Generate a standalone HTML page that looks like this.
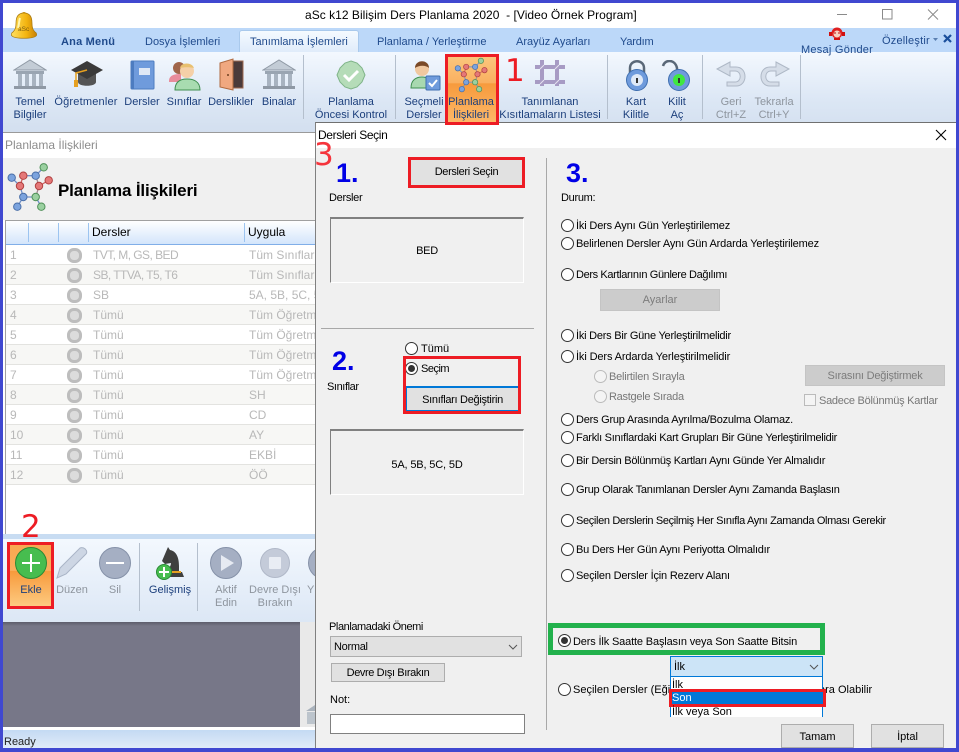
<!DOCTYPE html>
<html><head><meta charset="utf-8"><style>
html,body{margin:0;padding:0;width:959px;height:752px;overflow:hidden;background:#fff}
body{position:relative;font-family:"Liberation Sans",sans-serif;font-size:11px;color:#000}
div,span,svg{position:absolute}
.t{white-space:nowrap;line-height:13px}
.r{color:#1c3f7c;font-size:11px;line-height:13px;text-align:center;white-space:nowrap;transform:translateX(-50%);margin-top:1px}
.g{color:#8e959e}
.tab{color:#1f4a8c;font-size:11px;white-space:nowrap;line-height:13px;margin-top:1px}
.sep{width:1px;background:#b4bfcd}
.row{left:6px;width:309px;height:20px;border-bottom:1px solid #e3e3e0;box-sizing:border-box;color:#b8b8b8;font-size:12px;line-height:19px}
.row span{white-space:nowrap;top:1px}
.ci{left:61px;top:3px;width:9px;height:9px;border:3px solid #bdbdbd;border-radius:45%;background:#dcdcdc}
.rad{width:11px;height:11px;border:1px solid #333;border-radius:50%;background:#fff}
.rad.d{border-color:#bbb;background:#f4f4f4}
.rad.on:after{content:"";position:absolute;left:2px;top:2px;width:7px;height:7px;border-radius:50%;background:#333}
.red{border:3px solid #ed1c24;box-sizing:border-box}
.btn{background:#e1e1e1;border:1px solid #adadad;box-sizing:border-box;text-align:center;white-space:nowrap}
.o{font-size:11px;white-space:nowrap;line-height:13px;margin-top:1px}
.big{font-family:"Liberation Sans",sans-serif;font-weight:bold;color:#0000e6;font-size:27px;line-height:28px}
.rn{color:#ed1c24;font-family:"DejaVu Sans",sans-serif;font-size:31px;line-height:30px}
</style></head><body>

<!-- title -->
<div class="t" style="left:305px;top:9px;font-size:12px;letter-spacing:.03px">aSc k12 Bilişim Ders Planlama 2020 &nbsp;- [Video Örnek Program]</div>
<svg style="left:836px;top:8px" width="110" height="14" fill="none" stroke="#8a8a8a"><path d="M1 6.500H11"/><rect x="46.500" y="1.500" width="9.500" height="9.500"/><path d="M92 1.500l10 10M102 1.500l-10 10"/></svg>

<!-- tab bar -->
<div style="left:3px;top:28px;width:953px;height:24px;background:#bcd8f9"></div>
<div style="left:239px;top:30px;width:120px;height:23px;background:linear-gradient(#f5faff,#dfebfa);border:1px solid #a9c9ec;border-bottom:none;border-radius:3px 3px 0 0;box-sizing:border-box"></div>
<div class="tab" style="left:61px;top:35px;font-weight:bold;letter-spacing:.2px">Ana Menü</div>
<div class="tab" style="left:145px;top:35px">Dosya İşlemleri</div>
<div class="tab" style="left:250px;top:35px">Tanımlama İşlemleri</div>
<div class="tab" style="left:377px;top:35px">Planlama / Yerleştirme</div>
<div class="tab" style="left:516px;top:35px">Arayüz Ayarları</div>
<div class="tab" style="left:620px;top:35px;letter-spacing:-.2px">Yardım</div>
<div class="tab" style="left:801px;top:43px;z-index:5;letter-spacing:.25px">Mesaj Gönder</div>
<div class="tab" style="left:882px;top:34px;letter-spacing:.2px">Özelleştir</div>
<svg style="left:933px;top:32px;z-index:5" width="22" height="14"><path d="M0 6h5l-2.500 3z" fill="#5a7fb0"/><path d="M11 3l7 7M18 3l-7 7" stroke="#1a4f9c" stroke-width="2.200"/></svg>
<svg style="left:828px;top:26px;z-index:5" width="18" height="16"><circle cx="9" cy="7" r="5.500" fill="#e02020"/><circle cx="9" cy="8" r="3.500" fill="#f7d0c0"/><path d="M6 7h2M10 7h2" stroke="#c01010"/><rect x="1" y="6" width="3" height="4" fill="#d01010"/><rect x="14" y="6" width="3" height="4" fill="#d01010"/><rect x="6" y="12" width="6" height="2" fill="#d01010"/></svg>

<!-- bell -->
<svg style="left:10px;top:11px" width="28" height="30"><defs><linearGradient id="bg" x1="0" x2="1"><stop offset="0" stop-color="#ffe060"/><stop offset=".6" stop-color="#f3b410"/><stop offset="1" stop-color="#c88008"/></linearGradient></defs><circle cx="14" cy="3" r="2" fill="#d89a10"/><path d="M14 2C8 2 6 6 6 12c0 5-1 7-3 9-2 1-2 3-1 4 3 3 21 3 24 0 1-1 1-3-1-4-2-2-3-4-3-9 0-6-2-10-8-10z" fill="url(#bg)" stroke="#a87a10" stroke-width=".7"/><path d="M10 7c-1 3-1 7-2 10" stroke="#fff6b0" stroke-width="2" fill="none"/><text x="8" y="20" font-size="6.500" fill="#7a5a10" font-family="Liberation Sans">aSc</text></svg>

<!-- ribbon -->
<div style="left:3px;top:52px;width:953px;height:81px;background:linear-gradient(#f3f8fe,#dce7f5 60%,#d3dfef);border-bottom:1px solid #9a9a9a;box-sizing:border-box"></div>
<div class="sep" style="left:303px;top:55px;height:64px"></div>
<div class="sep" style="left:395px;top:55px;height:64px"></div>
<div class="sep" style="left:607px;top:55px;height:64px"></div>
<div class="sep" style="left:702px;top:55px;height:64px"></div>
<div class="sep" style="left:800px;top:55px;height:64px"></div>

<svg style="left:13px;top:59px" width="34" height="32"><path d="M1 11L17 1l16 10z" fill="#c3ccd6" stroke="#8f99a5"/><rect x="3" y="12" width="28" height="3" fill="#9aa5b2"/><g fill="#a8b3c0"><rect x="5" y="15" width="4" height="12"/><rect x="12" y="15" width="4" height="12"/><rect x="19" y="15" width="4" height="12"/><rect x="26" y="15" width="4" height="12"/></g><rect x="1" y="27" width="32" height="3" fill="#8f99a5"/></svg>
<svg style="left:70px;top:60px" width="34" height="30"><path d="M8 12v10c0 5 18 5 18 0V12z" fill="#555"/><path d="M1 10L17 1l16 9-16 9z" fill="#3a3a3a"/><path d="M17 10L6 13v8" stroke="#e6a020" stroke-width="1.500" fill="none"/><rect x="4" y="20" width="4" height="7" fill="#e6a020"/></svg>
<svg style="left:130px;top:60px" width="25" height="30"><rect x="1" y="1" width="23" height="28" rx="1" fill="#6f9bdc" stroke="#4d7cc0"/><rect x="1" y="1" width="3" height="28" fill="#4d7cc0"/><rect x="9" y="8" width="11" height="7" fill="#dfe8f5"/></svg>
<svg style="left:168px;top:59px" width="33" height="32"><circle cx="11" cy="9" r="6" fill="#a0654a"/><path d="M1 22c0-6 6-7 12-7v8H1z" fill="#e88c9c"/><circle cx="19" cy="12" r="7" fill="#f5d0a8"/><path d="M12 9c1-6 12-6 14 0-4-1-10-1-14 0z" fill="#e8c070"/><path d="M7 31c0-9 6-11 12-11s13 2 13 11z" fill="#a8dcb0" stroke="#3f8f50"/></svg>
<svg style="left:219px;top:58px" width="26" height="33"><rect x="9" y="3" width="15" height="27" fill="#4a3a3a" stroke="#a06a50"/><path d="M1 5l13-4v31L1 29z" fill="#f0a880" stroke="#b06a40"/><circle cx="9" cy="17" r="1" fill="#704020"/></svg>
<svg style="left:262px;top:59px" width="34" height="32"><path d="M1 11L17 1l16 10z" fill="#c3ccd6" stroke="#8f99a5"/><rect x="3" y="12" width="28" height="3" fill="#9aa5b2"/><g fill="#a8b3c0"><rect x="5" y="15" width="4" height="12"/><rect x="12" y="15" width="4" height="12"/><rect x="19" y="15" width="4" height="12"/><rect x="26" y="15" width="4" height="12"/></g><rect x="1" y="27" width="32" height="3" fill="#8f99a5"/></svg>
<svg style="left:336px;top:60px" width="30" height="30"><path d="M15 1l6 2 5 5 3 7-3 7-5 5-6 2-6-2-5-5-3-7 3-7 5-5z" fill="#b5dcb8" stroke="#7fb488"/><path d="M8 15l5 5 9-9" stroke="#fff" stroke-width="3" fill="none"/></svg>
<svg style="left:409px;top:60px" width="32" height="32"><circle cx="13" cy="9" r="7" fill="#f0c8a0"/><path d="M6 8c0-9 14-9 14 0-3-3-10-3-14 0z" fill="#7a4a28"/><path d="M2 28c0-8 5-11 11-11s8 3 8 11z" fill="#a8d8b0" stroke="#3f8f50"/><rect x="17" y="16" width="14" height="14" rx="1" fill="#6f9bdc" stroke="#3f6fb0"/><path d="M20 23l3 3 5-6" stroke="#fff" stroke-width="2" fill="none"/></svg>

<!-- highlighted button -->
<div style="left:448px;top:57px;width:48px;height:65px;background:linear-gradient(#fbc67c 0,#f9b060 40%,#f79a3c 41%,#fdb868 100%)"></div>
<div class="red" style="left:445px;top:54px;width:54px;height:71px;z-index:4"></div>
<svg style="left:453px;top:57px" width="36" height="36" viewBox="0 0 50 50" fill="none">
<g stroke-width="1.300"><path d="M6.700 15.700L15 24M18.300 13.700L30.700 13.700L38.700 5.300" stroke="#6f8fc8"/><path d="M18.300 13.700L15 24M34 24L43.700 18.300" stroke="#d06060"/><path d="M30.700 13.700L34 24L30.700 35" stroke="#a08890"/><path d="M15 24L18.300 35L30.700 35L36.300 44.700M18.300 35L12.300 44.700" stroke="#6f8fc8"/></g>
<g stroke-width="1"><circle cx="6.700" cy="15.700" r="3.700" fill="#7ba3de" stroke="#4a6fa8"/><circle cx="18.300" cy="13.700" r="3.700" fill="#e57878" stroke="#b04040"/><circle cx="30.700" cy="13.700" r="3.700" fill="#7ba3de" stroke="#4a6fa8"/><circle cx="38.700" cy="5.300" r="3.700" fill="#9ad0a0" stroke="#4f9058"/><circle cx="15" cy="24" r="3.700" fill="#e57878" stroke="#b04040"/><circle cx="34" cy="24" r="3.700" fill="#e57878" stroke="#b04040"/><circle cx="43.700" cy="18.300" r="3.700" fill="#e57878" stroke="#b04040"/><circle cx="18.300" cy="35" r="3.700" fill="#7ba3de" stroke="#4a6fa8"/><circle cx="30.700" cy="35" r="3.700" fill="#9ad0a0" stroke="#4f9058"/><circle cx="12.300" cy="44.700" r="3.700" fill="#7ba3de" stroke="#4a6fa8"/><circle cx="36.300" cy="44.700" r="3.700" fill="#9ad0a0" stroke="#4f9058"/></g></svg>

<svg style="left:534px;top:59px" width="32" height="28" stroke="#a79bc4" stroke-width="4"><path d="M8 1v26M23 1v26M1 8h30M1 23h30"/><path d="M6 10l4-4M21 10l4-4M6 25l4-4M21 25l4-4" stroke="#e6e2f0" stroke-width="1"/></svg>
<svg style="left:624px;top:60px" width="26" height="32"><path d="M6 14V8c0-9 14-9 14 0v6" fill="none" stroke="#5a6878" stroke-width="2.500"/><circle cx="13" cy="20" r="10.500" fill="#6f9bdc" stroke="#3f6fb0"/><circle cx="13" cy="20" r="6" fill="#dfe9f7"/><rect x="12" y="18" width="2" height="5" fill="#333"/></svg>
<svg style="left:661px;top:60px" width="30" height="32"><path d="M2 6c2-7 12-7 14 2v5" fill="none" stroke="#5a6878" stroke-width="2.500"/><circle cx="18" cy="20" r="10.500" fill="#6f9bdc" stroke="#3f6fb0"/><circle cx="18" cy="20" r="6" fill="#3fe83f"/><rect x="17" y="18" width="2" height="5" fill="#333"/></svg>
<svg style="left:716px;top:61px" width="32" height="28"><path d="M1 8L14 1v5h6c12 0 12 19 0 19h-9v-4h8c7 0 7-11 0-11H14v5z" fill="#d5dde8" stroke="#aeb8c6"/></svg>
<svg style="left:758px;top:61px" width="32" height="28"><path d="M31 8L18 1v5h-6C0 6 0 25 12 25h9v-4h-8c-7 0-7-11 0-11h5v5z" fill="#d5dde8" stroke="#aeb8c6"/></svg>

<div class="r" style="left:30px;top:95px">Temel<br>Bilgiler</div>
<div class="r" style="left:86px;top:95px;letter-spacing:.2px">Öğretmenler</div>
<div class="r" style="left:142px;top:95px">Dersler</div>
<div class="r" style="left:184px;top:95px">Sınıflar</div>
<div class="r" style="left:231px;top:95px">Derslikler</div>
<div class="r" style="left:279px;top:95px">Binalar</div>
<div class="r" style="left:351px;top:95px">Planlama<br>Öncesi Kontrol</div>
<div class="r" style="left:424px;top:95px">Seçmeli<br>Dersler</div>
<div class="r" style="left:471px;top:95px;z-index:5">Planlama<br>İlişkileri</div>
<div class="r" style="left:550px;top:95px">Tanımlanan<br>Kısıtlamaların Listesi</div>
<div class="r" style="left:636px;top:95px">Kart<br>Kilitle</div>
<div class="r" style="left:677px;top:95px">Kilit<br>Aç</div>
<div class="r g" style="left:731px;top:95px">Geri<br>Ctrl+Z</div>
<div class="r g" style="left:774px;top:95px">Tekrarla<br>Ctrl+Y</div>
<div class="rn" style="left:505px;top:56px;z-index:5">1</div>

<!-- left panel -->
<div class="t" style="left:5px;top:139px;font-size:12px;color:#8d8d8d">Planlama İlişkileri</div>
<div style="left:3px;top:158px;width:312px;height:62px;background:#f0f0f0"></div>
<svg style="left:5px;top:162px" width="50" height="50" viewBox="0 0 50 50" fill="none">
<g stroke-width="1.300"><path d="M6.700 15.700L15 24M18.300 13.700L30.700 13.700L38.700 5.300" stroke="#6f8fc8"/><path d="M18.300 13.700L15 24M34 24L43.700 18.300" stroke="#d06060"/><path d="M30.700 13.700L34 24L30.700 35" stroke="#a08890"/><path d="M15 24L18.300 35L30.700 35L36.300 44.700M18.300 35L12.300 44.700" stroke="#6f8fc8"/></g>
<g stroke-width="1"><circle cx="6.700" cy="15.700" r="3.700" fill="#7ba3de" stroke="#4a6fa8"/><circle cx="18.300" cy="13.700" r="3.700" fill="#e57878" stroke="#b04040"/><circle cx="30.700" cy="13.700" r="3.700" fill="#7ba3de" stroke="#4a6fa8"/><circle cx="38.700" cy="5.300" r="3.700" fill="#9ad0a0" stroke="#4f9058"/><circle cx="15" cy="24" r="3.700" fill="#e57878" stroke="#b04040"/><circle cx="34" cy="24" r="3.700" fill="#e57878" stroke="#b04040"/><circle cx="43.700" cy="18.300" r="3.700" fill="#e57878" stroke="#b04040"/><circle cx="18.300" cy="35" r="3.700" fill="#7ba3de" stroke="#4a6fa8"/><circle cx="30.700" cy="35" r="3.700" fill="#9ad0a0" stroke="#4f9058"/><circle cx="12.300" cy="44.700" r="3.700" fill="#7ba3de" stroke="#4a6fa8"/><circle cx="36.300" cy="44.700" r="3.700" fill="#9ad0a0" stroke="#4f9058"/></g></svg>
<div class="t" style="left:58px;top:181px;font-size:17px;line-height:20px;font-weight:bold;letter-spacing:-.17px">Planlama İlişkileri</div>

<div style="left:5px;top:220px;width:310px;height:316px;background:#fff;border:1px solid #a0a0a0;border-right:none;border-bottom:none;box-sizing:border-box"></div>
<div style="left:6px;top:221px;width:309px;height:24px;background:linear-gradient(#fff,#d3e5fb);border-bottom:1px solid #80aee8;box-sizing:border-box"></div>
<div style="left:28px;top:223px;width:1px;height:19px;background:#9cc4f0"></div>
<div style="left:58px;top:223px;width:1px;height:19px;background:#9cc4f0"></div>
<div style="left:88px;top:223px;width:1px;height:19px;background:#9cc4f0"></div>
<div style="left:244px;top:223px;width:1px;height:19px;background:#9cc4f0"></div>
<div class="t" style="left:92px;top:226px;font-size:12px">Dersler</div>
<div class="t" style="left:248px;top:226px;font-size:12px">Uygula</div>

<div class="row" style="top:245px"><span style="left:4px">1</span><div class="ci"></div><span style="left:87px;letter-spacing:-.55px">TVT, M, GS, BED</span><span style="left:243px">Tüm Sınıflar</span></div>
<div class="row" style="top:265px;background:#f7f7f5"><span style="left:4px">2</span><div class="ci"></div><span style="left:87px;letter-spacing:-.55px">SB, TTVA, T5, T6</span><span style="left:243px">Tüm Sınıflar</span></div>
<div class="row" style="top:285px"><span style="left:4px">3</span><div class="ci"></div><span style="left:87px">SB</span><span style="left:243px">5A, 5B, 5C, 5D</span></div>
<div class="row" style="top:305px;background:#f7f7f5"><span style="left:4px">4</span><div class="ci"></div><span style="left:87px">Tümü</span><span style="left:243px">Tüm Öğretmenler</span></div>
<div class="row" style="top:325px"><span style="left:4px">5</span><div class="ci"></div><span style="left:87px">Tümü</span><span style="left:243px">Tüm Öğretmenler</span></div>
<div class="row" style="top:345px;background:#f7f7f5"><span style="left:4px">6</span><div class="ci"></div><span style="left:87px">Tümü</span><span style="left:243px">Tüm Öğretmenler</span></div>
<div class="row" style="top:365px"><span style="left:4px">7</span><div class="ci"></div><span style="left:87px">Tümü</span><span style="left:243px">Tüm Öğretmenler</span></div>
<div class="row" style="top:385px;background:#f7f7f5"><span style="left:4px">8</span><div class="ci"></div><span style="left:87px">Tümü</span><span style="left:243px">SH</span></div>
<div class="row" style="top:405px"><span style="left:4px">9</span><div class="ci"></div><span style="left:87px">Tümü</span><span style="left:243px">CD</span></div>
<div class="row" style="top:425px;background:#f7f7f5"><span style="left:4px">10</span><div class="ci"></div><span style="left:87px">Tümü</span><span style="left:243px">AY</span></div>
<div class="row" style="top:445px"><span style="left:4px">11</span><div class="ci"></div><span style="left:87px">Tümü</span><span style="left:243px">EKBİ</span></div>
<div class="row" style="top:465px;background:#f7f7f5"><span style="left:4px">12</span><div class="ci"></div><span style="left:87px">Tümü</span><span style="left:243px">ÖÖ</span></div>

<div class="rn" style="left:21px;top:512px;z-index:5">2</div>

<!-- bottom toolbar -->
<div style="left:3px;top:534px;width:312px;height:88px;background:linear-gradient(#c8dcf2 0,#c8dcf2 5px,#f3f8fe 5px,#dce7f5)"></div>
<div style="left:10px;top:544px;width:41px;height:62px;background:linear-gradient(#f8a850 0,#f9ae5c 43%,#f79a3c 44%,#fdca80 100%)"></div>
<div class="red" style="left:7px;top:542px;width:47px;height:67px;z-index:4"></div>
<svg style="left:14px;top:546px" width="34" height="34"><circle cx="17" cy="17" r="15.500" fill="#47bd4f" stroke="#2a8a35"/><path d="M17 8v18M8 17h18" stroke="#fff" stroke-width="2"/></svg>
<svg style="left:56px;top:546px" width="34" height="34"><path d="M1 32l3-10L24 2c2-1 5 0 6 2 1 1 1 3 0 4L10 28z" fill="#cdd6e4" stroke="#a9b4c6"/></svg>
<svg style="left:98px;top:546px" width="34" height="34"><circle cx="17" cy="17" r="15.500" fill="#a5afc3" stroke="#8591a8"/><path d="M8 17h18" stroke="#fff" stroke-width="2"/></svg>
<svg style="left:156px;top:546px" width="30" height="34"><path d="M12 1l2 3c6 1 9 7 9 16v6h3l2 5H9c0-6 6-9 6-14l-6 1-3-3z" fill="#3f3f3f"/><rect x="14" y="25" width="11" height="2" fill="#e6a020"/><circle cx="8" cy="26" r="7.500" fill="#47bd4f" stroke="#2a8a35"/><path d="M8 21v10M3 26h10" stroke="#fff" stroke-width="2"/></svg>
<svg style="left:209px;top:546px" width="34" height="34"><circle cx="17" cy="17" r="15.500" fill="#a5afc3" stroke="#8591a8"/><path d="M12 9l13 8-13 8z" fill="#e6eaf2"/></svg>
<svg style="left:259px;top:547px" width="32" height="32"><circle cx="16" cy="16" r="14.500" fill="#c4cbd9" stroke="#b0b8c8"/><rect x="10" y="10" width="12" height="12" rx="1" fill="#e9edf4"/></svg>
<svg style="left:307px;top:546px" width="8" height="34"><circle cx="17" cy="17" r="15.500" fill="#a5afc3" stroke="#8591a8"/></svg>
<div class="sep" style="left:139px;top:543px;height:68px"></div>
<div class="sep" style="left:197px;top:543px;height:68px"></div>
<div class="r" style="left:31px;top:583px;z-index:5">Ekle</div>
<div class="r g" style="left:72px;top:583px">Düzen</div>
<div class="r g" style="left:115px;top:583px">Sil</div>
<div class="r" style="left:170px;top:583px">Gelişmiş</div>
<div class="r g" style="left:226px;top:583px">Aktif<br>Edin</div>
<div class="r g" style="left:275px;top:583px">Devre Dışı<br>Bırakın</div>
<div class="t g" style="left:307px;top:584px;width:8px;overflow:hidden">Yü</div>

<div style="left:3px;top:622px;width:297px;height:105px;background:#777788"></div>
<div style="left:3px;top:622px;width:312px;height:4px;background:linear-gradient(#5d5d6c,transparent)"></div>
<div style="left:300px;top:622px;width:15px;height:105px;background:#e9e9e9"></div>
<svg style="left:306px;top:703px" width="9" height="24"><path d="M0 8L9 2v6z" fill="#a9b2bc"/><rect x="1" y="9" width="8" height="12" fill="#bcc4cc"/></svg>
<div style="left:3px;top:727px;width:312px;height:3px;background:#fff"></div>
<div style="left:3px;top:730px;width:312px;height:18px;background:linear-gradient(#c4daf3,#e0ebf8)"></div>
<div class="t" style="left:4px;top:736px;font-size:11px;color:#222">Ready</div>

<!-- dialog -->
<div style="left:315px;top:122px;width:641px;height:626px;background:#f0f0f0;border-left:1px solid #808080;border-top:1px solid #707070;box-sizing:border-box"></div>
<div style="left:316px;top:123px;width:640px;height:25px;background:#fff"></div>
<div class="t" style="left:318px;top:129px;font-size:12px;letter-spacing:-.38px">Dersleri Seçin</div>
<svg style="left:935px;top:129px" width="12" height="12"><path d="M1 1l10 10M11 1L1 11" stroke="#000" stroke-width="1.100"/></svg>
<div class="rn" style="left:314px;top:140px;z-index:5;color:#f5343c">3</div>

<div class="big" style="left:336px;top:159px">1.</div>
<div class="big" style="left:332px;top:347px">2.</div>
<div class="big" style="left:566px;top:159px">3.</div>

<div class="o" style="left:329px;top:191px;letter-spacing:-.3px">Dersler</div>
<div class="btn" style="left:411px;top:160px;width:111px;height:25px;line-height:24px;border:none;letter-spacing:-.35px">Dersleri Seçin</div>
<div class="red" style="left:408px;top:157px;width:117px;height:31px"></div>
<div style="left:330px;top:217px;width:194px;height:66px;border:solid;border-color:#808080 #fff #fff #808080;border-width:2px 1px 1px 1px;box-sizing:border-box;text-align:center;line-height:64px;letter-spacing:-.3px">BED</div>
<div style="left:321px;top:328px;width:213px;height:1px;background:#a8a8a8"></div>
<div style="left:546px;top:158px;width:1px;height:572px;background:#a8a8a8"></div>

<div class="rad" style="left:405px;top:342px"></div><div class="o" style="left:421px;top:342px">Tümü</div>
<div class="rad on" style="left:405px;top:362px"></div><div class="o" style="left:421px;top:362px;letter-spacing:-.5px">Seçim</div>
<div class="o" style="left:327px;top:380px;letter-spacing:-.4px">Sınıflar</div>
<div class="btn" style="left:406px;top:386px;width:113px;height:26px;line-height:24px;border:solid #0078d7;border-width:2px 1px;letter-spacing:-.3px">Sınıfları Değiştirin</div>
<div class="red" style="left:403px;top:356px;width:118px;height:58px"></div>
<div style="left:330px;top:429px;width:194px;height:66px;border:solid;border-color:#808080 #fff #fff #808080;border-width:2px 1px 1px 1px;box-sizing:border-box;text-align:center;line-height:68px;letter-spacing:-.15px">5A, 5B, 5C, 5D</div>

<div class="o" style="left:329px;top:620px;letter-spacing:-.42px">Planlamadaki Önemi</div>
<div style="left:330px;top:636px;width:192px;height:21px;background:#e1e1e1;border:1px solid #adadad;box-sizing:border-box;padding-left:3px;line-height:21px;letter-spacing:-.3px">Normal</div>
<svg style="left:508px;top:644px" width="10" height="6"><path d="M1 1l4 4 4-4" stroke="#555" fill="none"/></svg>
<div class="btn" style="left:331px;top:663px;width:114px;height:19px;line-height:19px;letter-spacing:-.4px">Devre Dışı Bırakın</div>
<div class="o" style="left:330px;top:693px">Not:</div>
<div style="left:330px;top:714px;width:195px;height:20px;background:#fff;border:1px solid #808080;box-sizing:border-box"></div>

<div class="o" style="left:561px;top:191px;letter-spacing:-.3px">Durum:</div>
<div class="rad" style="left:561px;top:219px"></div><div class="o" style="left:576px;top:219px;letter-spacing:-.16px">İki Ders Aynı Gün Yerleştirilemez</div>
<div class="rad" style="left:561px;top:237px"></div><div class="o" style="left:576px;top:237px;letter-spacing:-.16px">Belirlenen Dersler Aynı Gün Ardarda Yerleştirilemez</div>
<div class="rad" style="left:561px;top:268px"></div><div class="o" style="left:576px;top:268px;letter-spacing:-.37px">Ders Kartlarının Günlere Dağılımı</div>
<div class="btn" style="left:600px;top:289px;width:120px;height:22px;line-height:21px;background:#ccc;color:#7c7c7c;border-color:#c4c4c4">Ayarlar</div>
<div class="rad" style="left:561px;top:329px"></div><div class="o" style="left:576px;top:329px;letter-spacing:-.23px">İki Ders Bir Güne Yerleştirilmelidir</div>
<div class="rad" style="left:561px;top:350px"></div><div class="o" style="left:576px;top:350px;letter-spacing:-.12px">İki Ders Ardarda Yerleştirilmelidir</div>
<div class="rad d" style="left:594px;top:370px"></div><div class="o" style="left:609px;top:370px;color:#777;letter-spacing:-.22px">Belirtilen Sırayla</div>
<div class="rad d" style="left:594px;top:390px"></div><div class="o" style="left:609px;top:390px;color:#777;letter-spacing:-.27px">Rastgele Sırada</div>
<div class="btn" style="left:805px;top:365px;width:140px;height:21px;line-height:20px;background:#ccc;color:#7c7c7c;border-color:#c4c4c4;letter-spacing:-.2px">Sırasını Değiştirmek</div>
<div style="left:804px;top:394px;width:12px;height:12px;background:#f4f4f4;border:1px solid #bbb;box-sizing:border-box"></div><div class="o" style="left:819px;top:394px;color:#777;letter-spacing:-.26px">Sadece Bölünmüş Kartlar</div>
<div class="rad" style="left:561px;top:413px"></div><div class="o" style="left:576px;top:413px;letter-spacing:-.23px">Ders Grup Arasında Ayrılma/Bozulma Olamaz.</div>
<div class="rad" style="left:561px;top:431px"></div><div class="o" style="left:576px;top:431px;letter-spacing:-.27px">Farklı Sınıflardaki Kart Grupları Bir Güne Yerleştirilmelidir</div>
<div class="rad" style="left:561px;top:454px"></div><div class="o" style="left:576px;top:454px;letter-spacing:-.28px">Bir Dersin Bölünmüş Kartları Aynı Günde Yer Almalıdır</div>
<div class="rad" style="left:561px;top:483px"></div><div class="o" style="left:576px;top:483px;letter-spacing:-.26px">Grup Olarak Tanımlanan Dersler Aynı Zamanda Başlasın</div>
<div class="rad" style="left:561px;top:514px"></div><div class="o" style="left:576px;top:514px;letter-spacing:-.35px">Seçilen Derslerin Seçilmiş Her Sınıfla Aynı Zamanda Olması Gerekir</div>
<div class="rad" style="left:561px;top:543px"></div><div class="o" style="left:576px;top:543px;letter-spacing:-.22px">Bu Ders Her Gün Aynı Periyotta Olmalıdır</div>
<div class="rad" style="left:561px;top:569px"></div><div class="o" style="left:576px;top:569px;letter-spacing:-.19px">Seçilen Dersler İçin Rezerv Alanı</div>

<div style="left:548px;top:623px;width:277px;height:32px;border:5px solid #22b14c;box-sizing:border-box"></div>
<div class="rad on" style="left:558px;top:634px"></div><div class="o" style="left:573px;top:635px;letter-spacing:-.15px">Ders İlk Saatte Başlasın veya Son Saatte Bitsin</div>

<div class="rad" style="left:558px;top:683px"></div><div class="o" style="left:573px;top:683px">Seçilen Dersler (Eğit</div>
<div class="o" style="left:819px;top:683px">ara Olabilir</div>

<div style="left:670px;top:656px;width:153px;height:21px;background:#cce4f7;border:1px solid #0078d7;box-sizing:border-box;padding-left:3px;line-height:20px">İlk</div>
<svg style="left:809px;top:664px" width="10" height="6"><path d="M1 1l4 4 4-4" stroke="#555" fill="none"/></svg>
<div style="left:670px;top:677px;width:153px;height:40px;background:#fff;border:solid #0078d7;border-width:0 1px;box-sizing:border-box"></div>
<div class="o" style="left:672px;top:678px">İlk</div>
<div style="left:671px;top:691px;width:151px;height:14px;background:#0078d7;color:#fff;line-height:14px;padding-left:1px;box-sizing:border-box">Son</div>
<div class="red" style="left:669px;top:689px;width:157px;height:18px"></div>
<div class="o" style="left:672px;top:705px">İlk veya Son</div>

<div class="btn" style="left:781px;top:724px;width:73px;height:24px;line-height:24px">Tamam</div>
<div class="btn" style="left:871px;top:724px;width:73px;height:24px;line-height:24px">İptal</div>

<!-- window border -->
<div style="left:0;top:0;width:959px;height:3px;background:#4048d0;z-index:9"></div>
<div style="left:0;top:0;width:3px;height:752px;background:#4048d0;z-index:9"></div>
<div style="left:956px;top:0;width:3px;height:752px;background:#4048d0;z-index:9"></div>
<div style="left:0;top:748px;width:959px;height:4px;background:#4048d0;z-index:9"></div>
</body></html>
